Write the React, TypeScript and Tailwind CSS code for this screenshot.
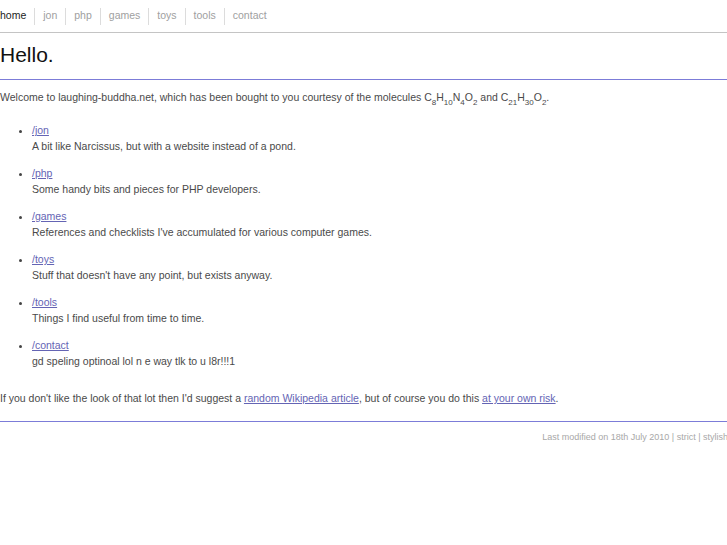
import React from 'react';

const navItems = ['home', 'jon', 'php', 'games', 'toys', 'tools', 'contact'];

const sections = [
  { href: '/jon', text: 'A bit like Narcissus, but with a website instead of a pond.' },
  { href: '/php', text: 'Some handy bits and pieces for PHP developers.' },
  { href: '/games', text: "References and checklists I've accumulated for various computer games." },
  { href: '/toys', text: "Stuff that doesn't have any point, but exists anyway." },
  { href: '/tools', text: 'Things I find useful from time to time.' },
  { href: '/contact', text: 'gd speling optinoal lol n e way tlk to u l8r!!!1' },
];

const Sub = ({ children }: { children: React.ReactNode }) => (
  <sub className="text-[8px] align-[-2px] leading-none">{children}</sub>
);

const App = () => {
  return (
    <div className="w-[727px] h-[545px] overflow-hidden bg-white text-[10.5px] text-[#4a4a4a] font-['Liberation_Sans',Arial,sans-serif]">
      <nav className="h-[33px] border-b border-[#c4c4c4] flex items-center text-[10.5px]">
        {navItems.map((item, i) => (
          <div
            key={item}
            className={`h-[17px] flex items-center ${i === 0 ? 'pr-[8px] text-[#222]' : 'px-[8px] border-l border-[#dcdcdc] text-[#a0a0a0]'}`}
          >
            {item}
          </div>
        ))}
      </nav>

      <h1 className="h-[46px] text-[21px] leading-[44px] text-[#111]">Hello.</h1>
      <div className="h-px bg-[#7c7cd8]" />

      <p className="mt-[9px] leading-[16px]">
        Welcome to laughing-buddha.net, which has been bought to you courtesy of the molecules C<Sub>8</Sub>H<Sub>10</Sub>N<Sub>4</Sub>O<Sub>2</Sub> and C<Sub>21</Sub>H<Sub>30</Sub>O<Sub>2</Sub>.
      </p>

      <ul className="mt-[17px] pl-[32px] list-disc marker:text-[#444]">
        {sections.map((s) => (
          <li key={s.href} className="mb-[11px] last:mb-0 leading-[16px]">
            <a href="#" className="text-[#6464b4] underline">{s.href}</a>
            <div>{s.text}</div>
          </li>
        ))}
      </ul>

      <p className="mt-[21px] leading-[16px]">
        If you don't like the look of that lot then I'd suggest a{' '}
        <a href="#" className="text-[#6464b4] underline">random Wikipedia article</a>, but of course you do this{' '}
        <a href="#" className="text-[#6464b4] underline">at your own risk</a>.
      </p>

      <div className="mt-[15px] h-px bg-[#7c7cd8]" />

      <div className="mt-[7px] -mr-[1px] text-right text-[9px] leading-[16px] text-[#a8a8a8]">
        Last modified on 18th July 2010 | strict | stylish
      </div>
    </div>
  );
};

export default App;
